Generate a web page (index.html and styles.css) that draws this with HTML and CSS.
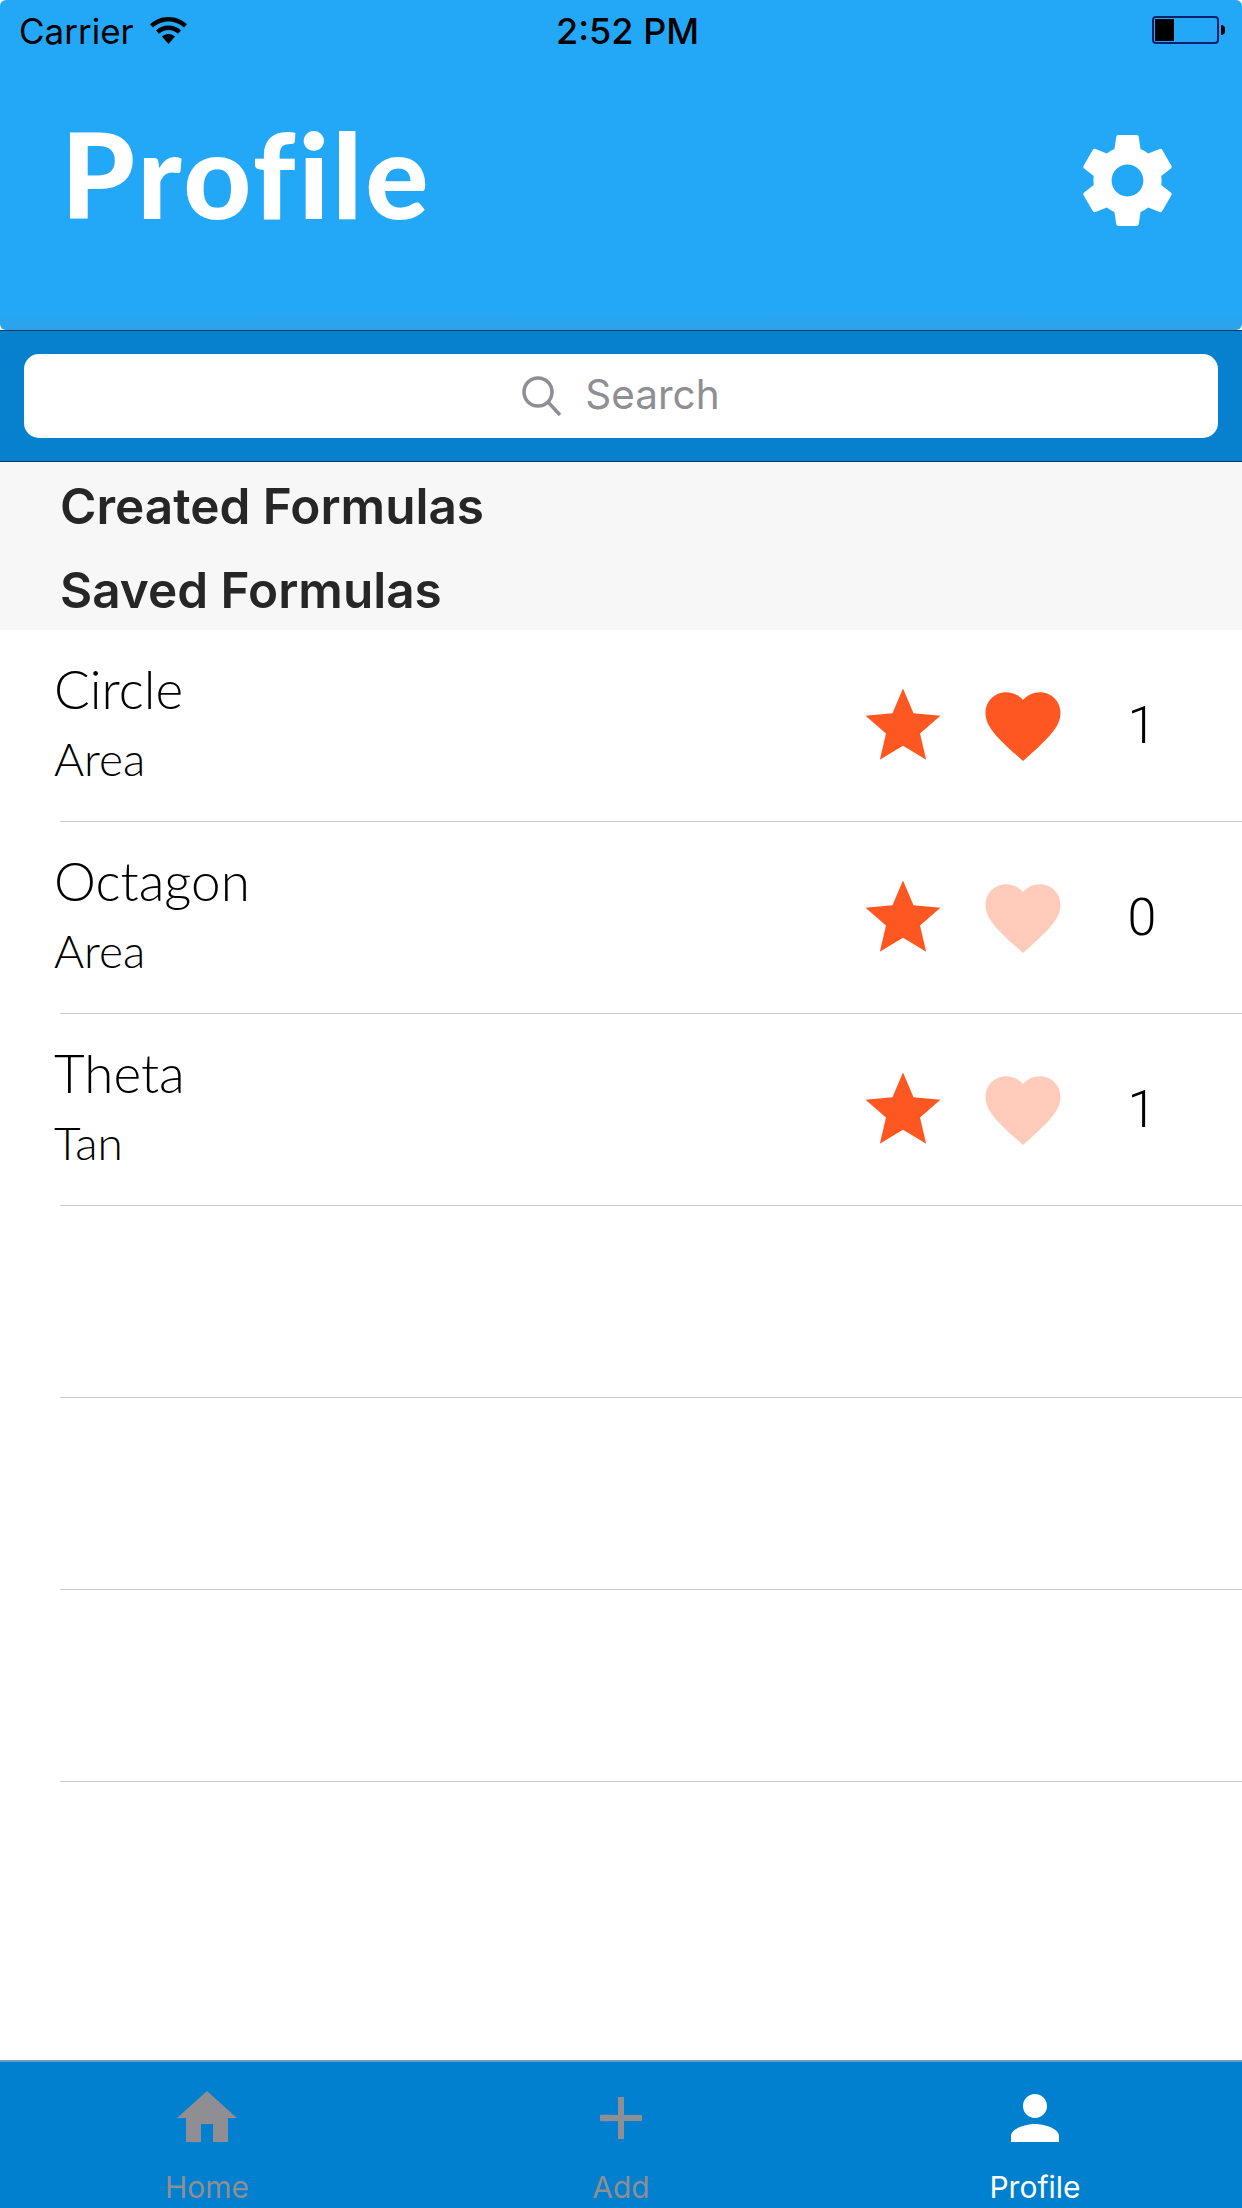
FILE: index.html
```html
<!DOCTYPE html>
<html lang="en">
<head>
    <meta charset="UTF-8">
    <meta name="viewport" content="width=device-width, initial-scale=1.0">
    <title>Profile</title>
    <link rel="stylesheet" href="styles.css">
</head>
<body>
    <div class="app">
        <header class="header">
            <div class="status-bar">
                <div class="status-left">
                    <span>Carrier</span>
                    <svg class="wifi" viewBox="0 0 37 27">
                        <path d="M18.5 0C11.4 0 5 2.800 0 7.300L3 10.600C7.100 6.900 12.500 4.500 18.500 4.500S29.900 6.900 34 10.600L37 7.300C32 2.800 25.600 0 18.500 0Z"/>
                        <path d="M18.500 8.500C13.700 8.500 9.400 10.300 6 13.400L9 16.700C11.600 14.300 14.900 12.900 18.500 12.900S25.400 14.300 28 16.700L31 13.400C27.600 10.300 23.300 8.500 18.500 8.500Z"/>
                        <path d="M18.500 17C16 17 13.800 17.900 12 19.500L18.500 27L25 19.500C23.200 17.900 21 17 18.500 17Z"/>
                    </svg>
                </div>
                <div class="status-time">2:52 PM</div>
                <div class="status-right">
                    <div class="battery"><div class="battery-level"></div></div>
                    <div class="battery-tip"></div>
                </div>
            </div>
            <div class="header-main">
                <h1>Profile</h1>
                <svg class="gear" viewBox="0 0 24 24"><path d="M19.430 12.980c.04-.32.07-.64.07-.98s-.03-.66-.07-.98l2.110-1.650c.19-.15.24-.42.12-.64l-2-3.460c-.12-.22-.39-.3-.61-.22l-2.490 1c-.52-.4-1.080-.73-1.690-.98l-.38-2.650C14.460 2.180 14.250 2 14 2h-4c-.25 0-.46.18-.49.42l-.38 2.650c-.61.25-1.170.59-1.690.98l-2.490-1c-.23-.09-.49 0-.61.22l-2 3.460c-.13.22-.07.49.12.64l2.110 1.650c-.04.32-.07.65-.07.98s.03.66.07.98l-2.110 1.650c-.19.15-.24.42-.12.64l2 3.460c.12.22.39.3.61.22l2.490-1c.52.4 1.080.73 1.690.98l.38 2.650c.03.24.24.42.49.42h4c.25 0 .46-.18.49-.42l.38-2.650c.61-.25 1.170-.59 1.690-.98l2.490 1c.23.09.49 0 .61-.22l2-3.460c.12-.22.07-.49-.12-.64l-2.110-1.650zM12 15.500c-1.930 0-3.500-1.570-3.500-3.500s1.570-3.500 3.500-3.500 3.500 1.570 3.500 3.500-1.570 3.500-3.500 3.500z"/></svg>
            </div>
        </header>

        <div class="search-bar">
            <div class="search-input">
                <svg class="search-icon" viewBox="0 0 40 40">
                    <circle cx="16" cy="16" r="14"/>
                    <line x1="26" y1="26" x2="38" y2="39"/>
                </svg>
                <span>Search</span>
            </div>
        </div>

        <div class="sections">
            <div class="section-title">Created Formulas</div>
            <div class="section-title">Saved Formulas</div>
        </div>

        <div class="list">
            <div class="row">
                <div class="row-text">
                    <div class="row-name">Circle</div>
                    <div class="row-type">Area</div>
                </div>
                <svg class="icon star" viewBox="0 0 24 24"><path d="M12 17.270L18.180 21l-1.640-7.030L22 9.240l-7.190-.61L12 2 9.190 8.630 2 9.240l5.460 4.730L5.820 21z"/></svg>
                <svg class="icon heart" viewBox="0 0 24 24"><path d="M12 21.350l-1.450-1.320C5.400 15.360 2 12.280 2 8.500 2 5.420 4.420 3 7.500 3c1.740 0 3.410.81 4.500 2.090C13.090 3.810 14.760 3 16.500 3 19.580 3 22 5.420 22 8.500c0 3.780-3.400 6.860-8.550 11.540L12 21.350z"/></svg>
                <div class="row-count">1</div>
            </div>
            <div class="row">
                <div class="row-text">
                    <div class="row-name">Octagon</div>
                    <div class="row-type">Area</div>
                </div>
                <svg class="icon star" viewBox="0 0 24 24"><path d="M12 17.270L18.180 21l-1.640-7.030L22 9.240l-7.190-.61L12 2 9.190 8.630 2 9.240l5.460 4.730L5.820 21z"/></svg>
                <svg class="icon heart faded" viewBox="0 0 24 24"><path d="M12 21.350l-1.450-1.320C5.400 15.360 2 12.280 2 8.500 2 5.420 4.420 3 7.500 3c1.740 0 3.410.81 4.500 2.090C13.090 3.810 14.760 3 16.500 3 19.580 3 22 5.420 22 8.500c0 3.780-3.400 6.860-8.550 11.540L12 21.350z"/></svg>
                <div class="row-count">0</div>
            </div>
            <div class="row">
                <div class="row-text">
                    <div class="row-name">Theta</div>
                    <div class="row-type">Tan</div>
                </div>
                <svg class="icon star" viewBox="0 0 24 24"><path d="M12 17.270L18.180 21l-1.640-7.030L22 9.240l-7.190-.61L12 2 9.190 8.630 2 9.240l5.460 4.730L5.820 21z"/></svg>
                <svg class="icon heart faded" viewBox="0 0 24 24"><path d="M12 21.350l-1.450-1.320C5.400 15.360 2 12.280 2 8.500 2 5.420 4.420 3 7.500 3c1.740 0 3.410.81 4.500 2.090C13.090 3.810 14.760 3 16.500 3 19.580 3 22 5.420 22 8.500c0 3.780-3.400 6.860-8.550 11.540L12 21.350z"/></svg>
                <div class="row-count">1</div>
            </div>
            <div class="row"></div>
            <div class="row"></div>
            <div class="row"></div>
        </div>

        <nav class="tab-bar">
            <div class="tab">
                <svg class="tab-icon" viewBox="0 0 24 24"><path d="M10 20v-6h4v6h5v-8h3L12 3 2 12h3v8z"/></svg>
                <span>Home</span>
            </div>
            <div class="tab">
                <svg class="tab-icon" viewBox="0 0 24 24"><path d="M19 13h-6v6h-2v-6H5v-2h6V5h2v6h6v2z"/></svg>
                <span>Add</span>
            </div>
            <div class="tab active">
                <svg class="tab-icon" viewBox="0 0 24 24"><path d="M12 12c2.210 0 4-1.790 4-4s-1.790-4-4-4-4 1.790-4 4 1.790 4 4 4zm0 2c-2.670 0-8 1.340-8 4v2h16v-2c0-2.660-5.330-4-8-4z"/></svg>
                <span>Profile</span>
            </div>
        </nav>
    </div>
</body>
</html>
```

FILE: styles.css
```css
html, body {
    margin: 0;
    padding: 0;
    background: #fff;
}

body {
    font-family: Inter, 'Liberation Sans', sans-serif;
}

.app {
    width: 1242px;
    height: 2208px;
    display: flex;
    flex-direction: column;
    overflow: hidden;
}

.header {
    height: 330px;
    box-sizing: border-box;
    background: linear-gradient(to bottom, #23a8f8 0, #23a8f8 310px, #2ea1e6 100%);
    border-radius: 6px;
}

.status-bar {
    height: 60px;
    padding: 0 17px 0 19px;
    display: flex;
    align-items: center;
    justify-content: space-between;
    position: relative;
    font-size: 35px;
    color: #000;
}

.status-left {
    display: flex;
    align-items: center;
    gap: 16px;
}

.status-left span {
    padding-top: 2px;
}

.wifi {
    width: 37px;
    height: 27px;
    fill: #000;
}

.status-time {
    position: absolute;
    left: 556px;
    padding-top: 2px;
    font-size: 36px;
    font-weight: 500;
}

.status-right {
    display: flex;
    align-items: center;
    gap: 2px;
}

.battery {
    width: 67px;
    height: 28px;
    box-sizing: border-box;
    border: 2px solid #0b1f6b;
    border-radius: 4px;
    padding: 1px;
}

.battery-level {
    width: 19px;
    height: 100%;
    background: #000;
}

.battery-tip {
    width: 4px;
    height: 10px;
    background: #000;
    border-radius: 0 5px 5px 0;
}

.header-main {
    display: flex;
    align-items: center;
    justify-content: space-between;
    padding: 45px 60px 0 61px;
}

.header-main h1 {
    margin: 0;
    font-family: Lato, sans-serif;
    font-weight: 900;
    font-size: 118px;
    line-height: 138px;
    letter-spacing: 3px;
    font-variant-ligatures: none;
    color: #fff;
}

.gear {
    width: 109px;
    height: 109px;
    margin-top: 12px;
    fill: #fff;
}

.search-bar {
    height: 132px;
    box-sizing: border-box;
    padding: 23px 24px;
    background: #0780ce;
    border-top: 1px solid #0b3a63;
    border-bottom: 1px solid #0b3a63;
}

.search-input {
    height: 84px;
    background: #fff;
    border-radius: 15px;
    display: flex;
    align-items: center;
    justify-content: center;
    gap: 23px;
    font-size: 40.5px;
    color: #8e8e93;
}

.search-input span {
    padding-bottom: 4px;
}

.search-icon {
    width: 40px;
    height: 40px;
    fill: none;
    stroke: #8e8e93;
    stroke-width: 3.5;
}

.sections {
    height: 168px;
    background: #f7f7f7;
}

.section-title {
    height: 84px;
    padding-left: 60px;
    font-size: 49.500px;
    font-weight: 600;
    line-height: 88px;
    color: #262626;
}

.list {
    flex: 1;
}

.row {
    height: 192px;
    box-sizing: border-box;
    margin-left: 60px;
    display: flex;
    align-items: center;
    border-bottom: 1px solid #c8c7cc;
}

.row-text {
    flex: 1;
    margin-left: -6px;
    padding-bottom: 1px;
    font-family: Lato, sans-serif;
    font-weight: 300;
    color: #000;
}

.row-name {
    font-size: 53px;
    line-height: 68px;
}

.row-type {
    font-size: 46px;
    line-height: 72px;
}

.icon {
    width: 90px;
    height: 90px;
    fill: #ff5722;
}

.heart {
    margin-left: 30px;
}

.heart.faded {
    opacity: 0.3;
}

.row-count {
    width: 146px;
    margin-right: 27px;
    margin-left: 1px;
    text-align: center;
    font-family: Roboto, sans-serif;
    font-weight: 300;
    font-size: 52px;
    color: #000;
}

.tab-bar {
    height: 148px;
    box-sizing: border-box;
    display: flex;
    background: #0080cf;
    border-top: 2px solid #6a9cc4;
}

.tab {
    flex: 1;
    display: flex;
    flex-direction: column;
    align-items: center;
    padding-top: 20px;
    font-size: 30px;
    color: #8e8e93;
}

.tab-icon {
    width: 72px;
    height: 72px;
    fill: #8e8e93;
}

.tab span {
    margin-top: 15px;
}

.tab.active {
    color: #fff;
}

.tab.active .tab-icon {
    fill: #fff;
}
```
